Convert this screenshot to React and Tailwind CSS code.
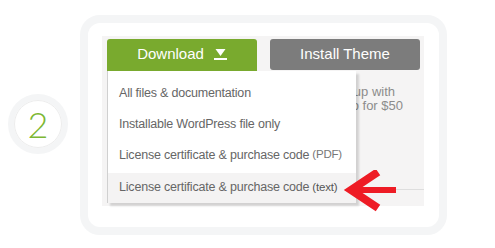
const menuItems = [
  { label: "All files & documentation" },
  { label: "Installable WordPress file only" },
  { label: "License certificate & purchase code", note: "(PDF)" },
];

const DownloadIcon = () => (
  <svg width="13" height="11" viewBox="0 0 13 11" className="ml-[10px]">
    <polygon points="1.5,0 11.5,0 6.5,7" fill="white" />
    <rect x="0" y="9" width="13" height="2" fill="white" />
  </svg>
);

const RedArrow = () => (
  <svg
    width="58"
    height="42"
    viewBox="0 0 58 42"
    className="absolute left-[340px] top-[170px]"
  >
    <path d="M14 20 H56" stroke="#ee1c25" strokeWidth="6" fill="none" />
    <path
      d="M38 2 L11 20 L38 38"
      stroke="#ee1c25"
      strokeWidth="8"
      fill="none"
      strokeLinejoin="miter"
      strokeMiterlimit="10"
    />
  </svg>
);

export default function App() {
  return (
    <div
      className="relative w-[495px] h-[248px] bg-white flex items-center pl-2 gap-3"
      style={{ fontFamily: '"Liberation Sans", Arial, sans-serif' }}
    >
      {/* step number */}
      <div className="w-[60px] h-[60px] shrink-0 rounded-full border-[6px] border-[#f4f5f6] bg-white flex items-center justify-center">
        <div className="w-full h-full rounded-full border border-[#ededed] flex items-center justify-center">
          <span
            className="text-[36px] leading-none font-light text-[#7cb733]"
            style={{ fontFamily: "Lato, sans-serif" }}
          >
            2
          </span>
        </div>
      </div>

      {/* card */}
      <div className="w-[367px] h-[220px] mt-[1px] rounded-[20px] border-[8px] border-[#f4f5f6] bg-white pl-[14px] pt-[13px]">
        <div className="relative w-[322px] h-[170px] bg-[#f5f4f4] pl-[5px] pt-[3px]">
          <div className="flex gap-[13px]">
            <div className="w-[150px] h-[32px] rounded-t-[3px] bg-[#79aa2e] flex items-center justify-center text-white text-[15px]">
              Download
              <DownloadIcon />
            </div>
            <div className="w-[150px] h-[31px] rounded-[3px] bg-[#7c7c7c] flex items-center justify-center text-white text-[15px]">
              Install Theme
            </div>
          </div>

          {/* text behind the menu */}
          <div className="absolute right-[29px] top-[49px] text-[13px] leading-[14px] text-[#8c8c8c] whitespace-nowrap">
            Have it set up with
          </div>
          <div className="absolute right-[21px] top-[63px] text-[13px] leading-[14px] text-[#8c8c8c] whitespace-nowrap">
            Envato Studio for $50
          </div>
          <div className="absolute left-[254px] right-0 top-[153px] border-t border-[#dedede]" />

          {/* dropdown */}
          <div className="absolute left-[5px] top-[35px] w-[249px] h-[132px] bg-white border-l border-[#d0d0d0] shadow-[3px_3px_2px_rgba(0,0,0,0.14)] pt-[7px] text-[12.5px] text-[#666]">
            {menuItems.map((item) => (
              <div key={item.label} className="h-[31px] flex items-center pl-[11px] whitespace-nowrap tracking-[-0.2px]">
                {item.label}
                {item.note && <span className="ml-[3px] text-[11.5px] text-[#777]">{item.note}</span>}
              </div>
            ))}
            <div className="mt-[2px] h-[30px] bg-[#f4f3f3] flex items-center pl-[11px] whitespace-nowrap tracking-[-0.2px]">
              License certificate &amp; purchase code
              <span className="ml-[3px] text-[11.5px] text-[#555]">(text)</span>
            </div>
          </div>
        </div>
      </div>

      <RedArrow />
    </div>
  );
}
